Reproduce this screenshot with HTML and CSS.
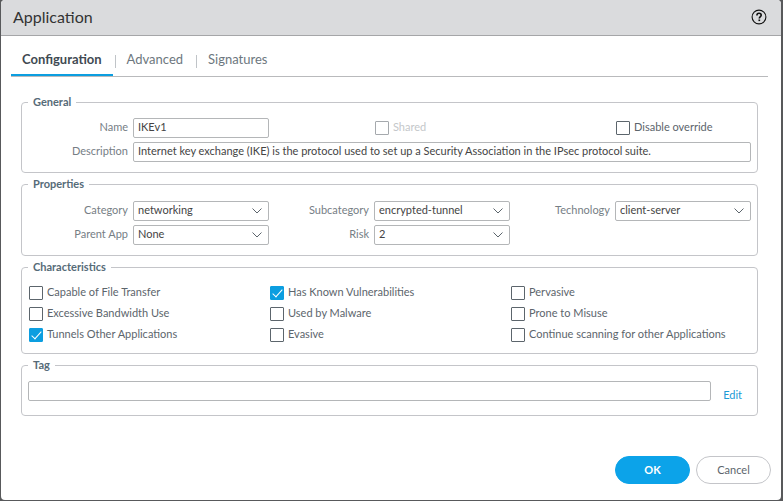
FILE: index.html
```html
<!DOCTYPE html>
<html lang="en">
<head>
<meta charset="utf-8">
<title>Application</title>
<link rel="stylesheet" href="styles.css">
</head>
<body>
<form class="dialog">
  <header class="dialog-header">
    <h1 class="dialog-title">Application</h1>
    <button type="button" class="help" aria-label="Help">
      <svg width="16" height="16" viewBox="0 0 16 16" fill="none" stroke="#111">
        <circle cx="8" cy="8" r="6.9" stroke-width="1.1"/>
        <path d="M5.9 6.5C5.9 5 6.8 4.3 8 4.3s2.2.7 2.2 1.9C10.200 7.600 8.300 7.700 8.300 9.500" stroke-width="1.6"/>
        <path d="M8.300 10.500v1.600" stroke-width="1.700"/>
      </svg>
    </button>
  </header>

  <nav class="tabs">
    <a class="tab tab-active" href="#configuration">Configuration</a>
    <a class="tab" href="#advanced">Advanced</a>
    <a class="tab" href="#signatures">Signatures</a>
  </nav>

  <main class="panels">
    <fieldset class="panel">
      <legend>General</legend>
      <div class="grid fields">
        <div class="field"><label for="name">Name</label><input class="box" id="name" type="text" value="IKEv1"></div>
        <label class="check check-offset check-disabled"><input type="checkbox" disabled>Shared</label>
        <label class="check check-offset"><input type="checkbox">Disable override</label>
        <div class="field field-wide"><label for="description">Description</label><input class="box" id="description" type="text" value="Internet key exchange (IKE) is the protocol used to set up a Security Association in the IPsec protocol suite."></div>
      </div>
    </fieldset>

    <fieldset class="panel panel-combos">
      <legend>Properties</legend>
      <div class="grid fields">
        <div class="field"><label for="category">Category</label><span class="combo"><select class="box" id="category"><option>networking</option></select><svg class="chevron" width="10" height="6" viewBox="0 0 10 6"><path d="M.5.5 5 5 9.500.5"/></svg></span></div>
        <div class="field"><label for="subcategory">Subcategory</label><span class="combo"><select class="box" id="subcategory"><option>encrypted-tunnel</option></select><svg class="chevron" width="10" height="6" viewBox="0 0 10 6"><path d="M.5.5 5 5 9.500.5"/></svg></span></div>
        <div class="field"><label for="technology">Technology</label><span class="combo"><select class="box" id="technology"><option>client-server</option></select><svg class="chevron" width="10" height="6" viewBox="0 0 10 6"><path d="M.5.5 5 5 9.500.5"/></svg></span></div>
        <div class="field"><label for="parent">Parent App</label><span class="combo"><select class="box" id="parent"><option>None</option></select><svg class="chevron" width="10" height="6" viewBox="0 0 10 6"><path d="M.5.5 5 5 9.500.5"/></svg></span></div>
        <div class="field"><label for="risk">Risk</label><span class="combo"><select class="box" id="risk"><option>2</option></select><svg class="chevron" width="10" height="6" viewBox="0 0 10 6"><path d="M.5.5 5 5 9.500.5"/></svg></span></div>
      </div>
    </fieldset>

    <fieldset class="panel panel-checks">
      <legend>Characteristics</legend>
      <div class="grid checks">
        <label class="check"><input type="checkbox">Capable of File Transfer</label>
        <label class="check"><input type="checkbox" checked>Has Known Vulnerabilities</label>
        <label class="check"><input type="checkbox">Pervasive</label>
        <label class="check"><input type="checkbox">Excessive Bandwidth Use</label>
        <label class="check"><input type="checkbox">Used by Malware</label>
        <label class="check"><input type="checkbox">Prone to Misuse</label>
        <label class="check"><input type="checkbox" checked>Tunnels Other Applications</label>
        <label class="check"><input type="checkbox">Evasive</label>
        <label class="check"><input type="checkbox">Continue scanning for other Applications</label>
      </div>
    </fieldset>

    <fieldset class="panel">
      <legend>Tag</legend>
      <div class="tag-row">
        <input class="box" type="text" aria-label="Tag">
        <a class="edit" href="#edit">Edit</a>
      </div>
    </fieldset>
  </main>

  <footer class="actions">
    <button type="submit" class="button button-primary">OK</button>
    <button type="button" class="button">Cancel</button>
  </footer>
</form>
</body>
</html>
```
FILE: styles.css
```css
* {
  box-sizing: border-box;
}

body {
  margin: 0;
  padding: 0 2px 1px 1px;
  min-height: 100vh;
  display: flex;
  background: #58595b;
  font: 11px/14px Lato, "Liberation Sans", sans-serif;
  color: #5c656c;
}

input,
select,
button {
  margin: 0;
  font: inherit;
  color: inherit;
}

a {
  text-decoration: none;
}

.dialog {
  flex: 1;
  min-width: 0;
  display: flex;
  flex-direction: column;
  background: #fff;
  border-radius: 4px;
  overflow: hidden;
}

.dialog-header {
  display: flex;
  align-items: center;
  justify-content: space-between;
  height: 36px;
  padding: 0 14px 2px 12px;
  background: #dadbdd;
  border-bottom: 1px solid #a5a6a8;
}

.dialog-title {
  margin: 0;
  font-size: 16px;
  line-height: 20px;
  font-weight: 400;
  color: #333;
}

.help {
  display: flex;
  padding: 0;
  border: 0;
  background: none;
}

.tabs {
  display: flex;
  height: 41px;
  margin: 0 13px 0 10px;
  border-bottom: 1px solid #b9babc;
  font-size: 13px;
  line-height: 16px;
}

.tab {
  display: flex;
  padding: 15px 11px 0;
  color: #6d777e;
}

.tab + .tab::before {
  content: "";
  width: 1px;
  height: 13px;
  margin: 4px 11px 0 -9px;
  background: #c0c4c8;
}

.tab-active {
  border-bottom: 2px solid #0c9ee0;
  font-weight: 700;
  color: #3f4a52;
}

.tab:nth-child(2) {
  padding-right: 22px;
}

.tab:last-child {
  padding-left: 0;
}

.panels {
  display: flex;
  flex-direction: column;
  gap: 4px;
  margin: 18px 23px 0 20px;
}

.panel {
  min-width: 0;
  margin: 0;
  padding: 8px 6px 10px;
  border: 1px solid #c4c5c9;
  border-radius: 4px;
}

.panel-combos {
  padding-top: 9px;
}

.panel-checks {
  padding-bottom: 5px;
}

.panel legend {
  padding: 0 5px 2px;
  line-height: 13px;
  font-weight: 700;
  color: #566b78;
}

.grid {
  display: grid;
  grid-template-columns: repeat(3, 1fr);
}

.fields {
  row-gap: 4px;
}

.field {
  display: grid;
  grid-template-columns: 100px 1fr;
  column-gap: 5px;
  color: #767e85;
}

.field > label {
  padding-top: 2px;
  text-align: right;
}

.field-wide {
  grid-column: 1 / -1;
}

.box {
  width: 100%;
  min-width: 0;
  height: 20px;
  padding: 0 4px 3px;
  border: 1px solid #b4b6b8;
  border-radius: 2px;
  background: #fff;
  color: #444;
}

.combo {
  display: grid;
  align-items: center;
}

.combo > * {
  grid-area: 1 / 1;
}

select.box {
  padding-bottom: 2px;
  appearance: none;
}

.chevron {
  justify-self: end;
  margin-right: 7px;
  fill: none;
  stroke: #5c656c;
  pointer-events: none;
}

.checks {
  padding-top: 2px;
}

.checks > .check {
  height: 21px;
}

.check {
  display: flex;
  gap: 4px;
  padding-left: 1px;
}

.check-offset {
  padding-left: 106px;
  padding-top: 2px;
}

.check-disabled {
  color: #c4c7ca;
}

.check input {
  appearance: none;
  flex: none;
  display: grid;
  place-items: center;
  width: 14px;
  height: 14px;
  margin-top: 1px;
  border: 1px solid #5c656c;
  border-radius: 1px;
  background: #fff;
}

.check input:disabled {
  border-color: #a5a9ad;
}

.check input:checked {
  border-color: #0c9ee0;
  background: #0c9ee0;
}

.check input:checked::after {
  content: "";
  width: 4px;
  height: 9px;
  margin-bottom: 2px;
  border: solid #fff;
  border-width: 0 1px 1px 0;
  transform: rotate(42deg);
}

.tag-row {
  display: flex;
  gap: 12px;
  padding-bottom: 4px;
}

.tag-row .box {
  flex: 1;
}

.edit {
  margin: 7px 9px 0 0;
  line-height: 13px;
  color: #1b9ad6;
}

.actions {
  display: flex;
  justify-content: flex-end;
  gap: 6px;
  margin-top: auto;
  padding: 16px 10px;
}

.button {
  width: 75px;
  height: 28px;
  padding: 0;
  border: 1px solid #c4c5c9;
  border-radius: 14px;
  background: #fff;
}

.button-primary {
  border-color: #0ca3e9;
  background: #0ca3e9;
  color: #fff;
  font-weight: 700;
}
```
